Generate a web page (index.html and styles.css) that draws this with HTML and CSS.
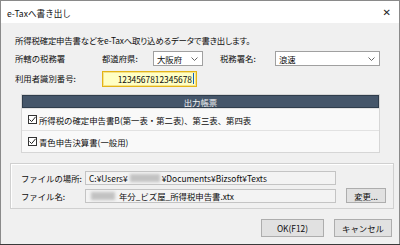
FILE: index.html
```
<!DOCTYPE html>
<html lang="ja">
<head>
<meta charset="utf-8">
<title>e-Taxへ書き出し</title>
<link rel="stylesheet" href="styles.css">
</head>
<body>
<div class="win">
  <div class="titlebar">
    <span class="title">e-Taxへ書き出し</span>
    <span class="close">✕</span>
  </div>
  <div class="content">
    <p class="desc">所得税確定申告書などをe-Taxへ取り込めるデータで書き出します。</p>
    <div class="row office-row">
      <span class="lbl office">所轄の税務署</span>
      <span class="lbl pref">都道府県:</span>
      <div class="select sel-pref"><span>大阪府</span><svg class="chev" width="7" height="4" viewBox="0 0 7 4"><path d="M0.5 0.5 L3.5 3.5 L6.5 0.5" fill="none" stroke="#555" stroke-width="0.9"/></svg></div>
      <span class="lbl zeimu">税務署名:</span>
      <div class="select sel-office"><span>浪速</span><svg class="chev" width="7" height="4" viewBox="0 0 7 4"><path d="M0.5 0.5 L3.5 3.5 L6.5 0.5" fill="none" stroke="#555" stroke-width="0.9"/></svg></div>
    </div>
    <div class="row id-row">
      <span class="lbl idlbl">利用者識別番号:</span>
      <div class="idinput"><span>1234567812345678</span><i class="caret"></i></div>
    </div>
    <div class="forms">
      <div class="forms-head">出力帳票</div>
      <div class="form-row"><span class="cb"><svg width="9" height="9" viewBox="0 0 9 9"><path d="M1.5 4.5 L3.6 6.6 L7.6 1.8" fill="none" stroke="#222" stroke-width="1"/></svg></span>所得税の確定申告書B(第一表・第二表)、第三表、第四表</div>
      <div class="form-row"><span class="cb"><svg width="9" height="9" viewBox="0 0 9 9"><path d="M1.5 4.5 L3.6 6.6 L7.6 1.8" fill="none" stroke="#222" stroke-width="1"/></svg></span>青色申告決算書(一般用)</div>
    </div>
    <div class="files">
      <div class="frow">
        <span class="flbl">ファイルの場所:</span>
        <div class="field">C:¥Users¥<span class="blur w1"></span>¥Documents¥Bizsoft¥Texts</div>
      </div>
      <div class="frow">
        <span class="flbl">ファイル名:</span>
        <div class="field"><span class="blur w2"></span>年分_ビズ屋_所得税申告書.xtx</div>
        <button class="btn change">変更...</button>
      </div>
    </div>
    <div class="buttons">
      <button class="btn ok">OK(F12)</button>
      <button class="btn cancel">キャンセル</button>
    </div>
  </div>
</div>
</body>
</html>
```
FILE: styles.css
```
* { box-sizing: border-box; }
html, body { margin: 0; padding: 0; }
body {
  width: 400px;
  height: 245px;
  background: #3a3a3a;
  font-family: "Noto Sans CJK JP", "Noto Sans", sans-serif;
  font-size: 8.4px;
  color: #0d0d0d;
  overflow: hidden;
}
.win {
  width: 400px;
  height: 244px;
  border: 1px solid #8a8a8a;
  border-bottom: none;
  background: #f0f0f0;
}
.titlebar {
  height: 22px;
  background: #ffffff;
  display: flex;
  align-items: center;
  justify-content: space-between;
  padding: 0 6px 0 6px;
}
.title { font-size: 8.6px; color: #111; padding-top: 2px; }
.close { font-size: 10px; color: #222; font-family: "DejaVu Sans", sans-serif; margin-right: 2px; }
.content { padding: 11px 7px 0 14px; }
.desc { margin: 0; height: 12px; line-height: 12px; font-feature-settings: "palt"; letter-spacing: -0.15px; }
.row { display: flex; align-items: center; height: 15px; }
.office-row { margin-top: 5px; }
.id-row { margin-top: 5px; }
.lbl { line-height: 15px; }
.office { width: 87px; }
.pref { width: 51px; }
.zeimu { width: 55px; margin-left: 17px; }
.select {
  height: 15px;
  background: #fff;
  border: 1px solid #a0a0a0;
  display: flex;
  align-items: center;
  justify-content: space-between;
  padding: 0 4px 0 3px;
}
.sel-pref { width: 50px; }
.sel-office { width: 105px; }
.chev { display: block; }
.idlbl { width: 87px; }
.idinput {
  width: 95px;
  height: 16px;
  background: #ffffc4;
  border: 1px solid #e3b417;
  box-shadow: inset 0 0 0 1px #f6e38a;
  display: flex;
  align-items: center;
  justify-content: flex-end;
  padding-right: 2px;
}
.caret { display: block; width: 1px; height: 11px; background: #1060c0; margin-left: 1px; }
.forms {
  margin: 8px 12px 0 6px;
  border: 1px solid #d6d6d6;
  background: #f7f7f7;
}
.forms-head {
  height: 13px;
  background: #45566a;
  color: #f2f2f2;
  text-align: center;
  line-height: 13px;
  border: 1px solid #2f3d4c;
}
.form-row {
  height: 22px;
  display: flex;
  align-items: center;
  padding-left: 6px;
  border-top: 1px solid #e2e2e2;
  background: #f9f9f9;
}
.cb {
  width: 9px;
  height: 9px;
  border: 1px solid #333;
  background: #fff;
  margin-right: 2px;
  display: flex;
  align-items: center;
  justify-content: center;
}
.cb svg { display: block; flex: none; }
.files {
  margin: 10px 0 0 -5px;
  width: 384px;
  height: 46px;
  border: 1px solid #d0d0d0;
  box-shadow: inset 1px 1px 0 #fff;
  padding: 6px 0 0 10px;
}
.frow { display: flex; align-items: center; height: 15px; }
.frow + .frow { margin-top: 3px; }
.flbl { width: 64px; }
.field {
  width: 251px;
  height: 14px;
  border: 1px solid #c4c4c4;
  background: #f3f3f3;
  padding-left: 3px;
  display: flex;
  align-items: center;
  white-space: nowrap;
  overflow: hidden;
}
.blur {
  display: inline-block;
  height: 8px;
  background: #c2c2c2;
  filter: blur(1.5px);
}
.w1 { width: 30px; margin: 0 2px; }
.w2 { width: 24px; margin: 0 4px 0 2px; }
.btn {
  font-family: inherit;
  font-size: 8.4px;
  color: #0d0d0d;
  background: #e1e1e1;
  border: 1px solid #adadad;
  padding: 0;
  margin: 0;
}
.change { width: 40px; height: 15px; margin-left: 10px; }
.buttons {
  display: flex;
  justify-content: flex-end;
  gap: 10px;
  margin-top: 10px;
}
.ok { width: 63px; height: 18px; }
.cancel { width: 58px; height: 18px; }
```
